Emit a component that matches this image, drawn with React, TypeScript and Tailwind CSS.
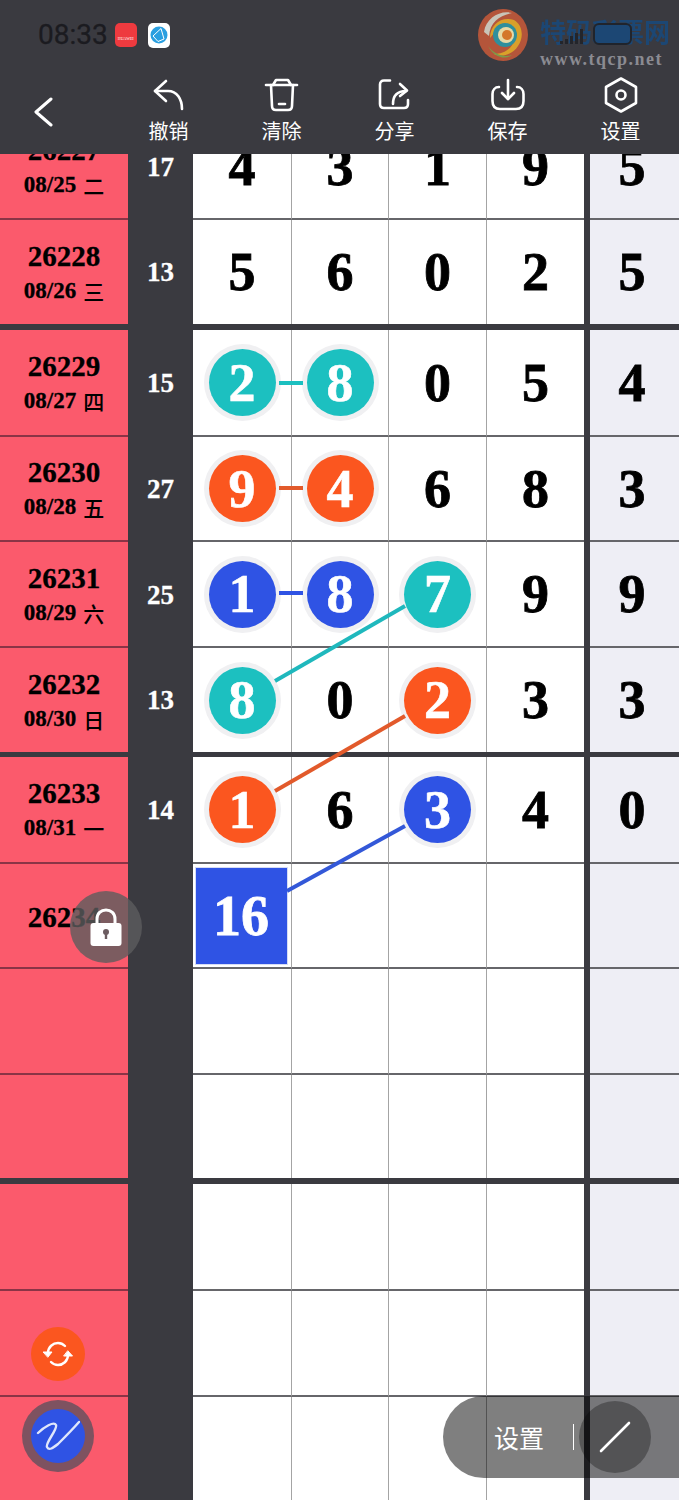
import React from "react";

const RED = "bg-[#fb5a6c]";
const SERIF = "font-['Liberation_Serif','Noto_Sans_CJK_SC',serif]";

type Ball = { n: number; color: string };
type Row = {
  h: number;
  id?: string;
  date?: string;
  sum?: string;
  cells?: (string | Ball | null)[];
  last?: string;
  line?: boolean;
  block?: string;
};

const TEAL = "bg-[#1cc0c0]";
const ORANGE = "bg-[#fb561f]";
const BLUE = "bg-[#2f53e4]";

// one block of rows per group, a thick bar goes between groups
const groups: Row[][] = [
  [
    { h: 105, id: "26227", date: "08/25 二", sum: "17", cells: ["4", "3", "1", "9"], last: "5", line: true },
    { h: 104, id: "26228", date: "08/26 三", sum: "13", cells: ["5", "6", "0", "2"], last: "5" },
  ],
  [
    { h: 107, id: "26229", date: "08/27 四", sum: "15", cells: [{ n: 2, color: TEAL }, { n: 8, color: TEAL }, "0", "5"], last: "4", line: true },
    { h: 105, id: "26230", date: "08/28 五", sum: "27", cells: [{ n: 9, color: ORANGE }, { n: 4, color: ORANGE }, "6", "8"], last: "3", line: true },
    { h: 106, id: "26231", date: "08/29 六", sum: "25", cells: [{ n: 1, color: BLUE }, { n: 8, color: BLUE }, { n: 7, color: TEAL }, "9"], last: "9", line: true },
    { h: 104, id: "26232", date: "08/30 日", sum: "13", cells: [{ n: 8, color: TEAL }, "0", { n: 2, color: ORANGE }, "3"], last: "3" },
  ],
  [
    { h: 107, id: "26233", date: "08/31 一", sum: "14", cells: [{ n: 1, color: ORANGE }, "6", { n: 3, color: BLUE }, "4"], last: "0", line: true },
    { h: 105, id: "26234", block: "16", line: true },
    { h: 106, line: true },
    { h: 103 },
  ],
  [
    { h: 107, line: true },
    { h: 106, line: true },
    { h: 103 },
  ],
];

function BallCell({ n, color }: Ball) {
  return (
    <div className={`flex h-[67px] w-[67px] items-center justify-center rounded-full text-[54px] font-bold leading-none text-white ring-[5px] ring-[#f0f0f2] [-webkit-text-stroke:0.6px_white] ${color}`}>
      {n}
    </div>
  );
}

function TableRow({ row }: { row: Row }) {
  const rule = row.line ? "border-b-2 border-b-[#66666a]" : "";
  const redRule = row.line ? "border-b-2 border-b-[#8a3446]" : "";
  const cells = row.cells ?? [null, null, null, null];
  const [day, week] = row.date ? row.date.split(" ") : [];
  return (
    <div className="grid grid-cols-[128px_65px_99px_97px_98px_97px_6px_89px]" style={{ height: row.h }}>
      <div className={`flex flex-col items-center justify-center pt-[2px] font-bold text-black ${RED} ${redRule}`}>
        {row.id && <div className="text-[29px] leading-[34px] [-webkit-text-stroke:0.3px_black]">{row.id}</div>}
        {row.date && (
          <div className="flex items-center pt-[1px] leading-[34px]">
            <span className="text-[23px] [-webkit-text-stroke:0.3px_black]">{day}</span>
            <span className="ml-[7px] font-['Noto_Sans_CJK_SC',sans-serif] text-[21px] font-medium">{week}</span>
          </div>
        )}
      </div>
      <div className="flex items-center justify-center bg-[#3a3a40] text-[27px] font-bold text-white [-webkit-text-stroke:0.3px_white]">{row.sum}</div>
      {cells.map((c, i) => (
        <div
          key={i}
          className={`flex items-center justify-center bg-white text-[54px] font-bold leading-none text-black [-webkit-text-stroke:0.8px_black] ${rule} ${i < 3 ? "border-r border-r-[#a4a4a4]" : ""}`}
        >
          {i === 0 && row.block ? (
            <div className="mr-[2px] flex h-[98px] w-[93px] items-center justify-center border border-[#d5dcf5] bg-[#2f53e4] text-[56px] text-white [-webkit-text-stroke:0.8px_white]">{row.block}</div>
          ) : typeof c === "string" ? (
            c
          ) : c ? (
            <BallCell {...c} />
          ) : null}
        </div>
      ))}
      <div className="bg-[#3a3a40]" />
      <div className={`flex items-center justify-center bg-[#eeeef5] pr-[5px] text-[54px] font-bold leading-none text-black [-webkit-text-stroke:0.8px_black] ${rule}`}>{row.last}</div>
    </div>
  );
}

function ToolIcon({ children }: { children: React.ReactNode }) {
  return (
    <svg width="36" height="36" viewBox="0 0 36 36" fill="none" stroke="white" strokeWidth="2.6" strokeLinecap="round" strokeLinejoin="round">
      {children}
    </svg>
  );
}

const tools: { label: string; icon: React.ReactNode }[] = [
  {
    label: "撤销",
    icon: (
      <>
        <path d="M15 4 L4 14 L15 24" />
        <path d="M4 14 H17 C26 14 31 22 31 32" />
      </>
    ),
  },
  {
    label: "清除",
    icon: (
      <>
        <path d="M2 8 H33" />
        <path d="M9 8 L12 3 H24 L27 8" />
        <path d="M7 8 L8 29 C8 32 9.5 33 12 33 H24 C26.5 33 28 32 28 29 L29 8" />
        <path d="M15 27 H21" />
      </>
    ),
  },
  {
    label: "分享",
    icon: (
      <>
        <path d="M13 3.5 H7 C4.5 3.5 3 5 3 7.5 V27 C3 29.5 4.5 31 7 31 H27 C29.5 31 31 29.5 31 27 V23" />
        <path d="M16 27 C16 19 20 14 29 14" />
        <path d="M23 7 L30 13.5 L23 19" />
      </>
    ),
  },
  {
    label: "保存",
    icon: (
      <>
        <path d="M9 10 C5 10 2.5 13 2.5 17 V24 C2.5 29 5 32 10 32 H26 C31 32 33.5 29 33.5 24 V17 C33.5 13 31 10 27 10" />
        <path d="M18 3 V22" />
        <path d="M12 16 L18 22 L24 16" />
      </>
    ),
  },
  {
    label: "设置",
    icon: (
      <>
        <path d="M18 1.5 L33 10 V26 L18 34.5 L3 26 V10 Z" />
        <circle cx="18" cy="18" r="4.5" />
      </>
    ),
  },
];

function StatusBar() {
  return (
    <div className="flex h-[70px] items-center pl-[38px]">
      <span className="font-['Roboto',sans-serif] text-[28px] leading-none text-[#1b1b20] [-webkit-text-stroke:0.3px_#1b1b20]">08:33</span>
      <div className="ml-[7px] flex h-[24px] w-[22px] flex-col items-center justify-end rounded-[5px] bg-[#ee3a3f] pb-[6px] text-[4px] leading-none text-white">HUAWEI</div>
      <div className="ml-[11px] flex h-[25px] w-[22px] items-center justify-center rounded-[5px] bg-white">
        <svg width="18" height="18" viewBox="0 0 18 18">
          <circle cx="9" cy="9" r="8.5" fill="#2a9fe0" />
          <path d="M3 10 L11 2.5 L14 13 L8 15.5 Z" fill="none" stroke="white" strokeWidth="1" />
        </svg>
      </div>
    </div>
  );
}

// site stamp in the top right corner, lies above the status icons
function SiteMark() {
  return (
    <div className="absolute left-[476px] top-[8px] flex">
      <svg width="54" height="54" viewBox="0 0 54 54">
        <ellipse cx="27" cy="27" rx="25" ry="26" fill="#b4553a" />
        <path d="M8 24 C10 10 24 2 36 5 C24 7 14 14 13 28 Z" fill="#c9c4b8" />
        <path d="M14 30 C14 16 26 8 38 12 C47 17 48 30 42 38 C37 46 26 50 18 46 C26 46 36 42 38 32 C40 22 30 16 24 20 C18 24 16 28 14 30 Z" fill="#d9a02a" />
        <ellipse cx="29" cy="27" rx="12" ry="12" fill="#2f8f9c" />
        <ellipse cx="30" cy="27" rx="8" ry="8" fill="#e6d9a6" />
        <ellipse cx="31" cy="27" rx="5" ry="5" fill="#d4762a" />
        <path d="M12 38 C18 46 28 50 36 47 C30 52 18 50 12 38 Z" fill="#7c9a4a" />
      </svg>
      <div className="relative ml-[10px] pt-[9px]">
        <div className="w-[130px] font-['Noto_Sans_CJK_SC',sans-serif] text-[26px] font-bold leading-[28px] text-[#1c4774] blur-[0.6px]">特码彩票网</div>
        <div className="absolute left-[20px] top-[20px] flex h-[16px] items-end gap-[2px]">
          {[3, 5, 8, 11, 15].map((h) => (
            <div key={h} className="w-[3px] bg-[#23252b]" style={{ height: h }} />
          ))}
        </div>
        <div className="absolute left-[53px] top-[15px] h-[22px] w-[39px] rounded-[6px] border-2 border-[#20242c] bg-[#1c4774]" />
        <div className="mt-[5px] font-['Liberation_Serif',serif] text-[18px] font-bold leading-[18px] tracking-[1.5px] text-[#8b8b92]">www.tqcp.net</div>
      </div>
    </div>
  );
}

function Toolbar() {
  return (
    <div className="flex h-[84px]">
      <div className="flex w-[112px] items-center pl-[33px]">
        <svg width="20" height="32" viewBox="0 0 20 32" fill="none" stroke="white" strokeWidth="3" strokeLinecap="round" strokeLinejoin="round">
          <path d="M18 3 L3 16 L18 29" />
        </svg>
      </div>
      {tools.map((t) => (
        <div key={t.label} className="flex w-[113px] flex-col items-center pt-[7px]">
          <ToolIcon>{t.icon}</ToolIcon>
          <div className="mt-[5px] font-['Noto_Sans_CJK_SC',sans-serif] text-[20px] leading-[26px] text-white">{t.label}</div>
        </div>
      ))}
    </div>
  );
}

export default function App() {
  return (
    <div className={`relative h-[1500px] w-[679px] overflow-hidden bg-[#3a3a40] ${SERIF}`}>
      <header className="relative h-[154px] bg-[#3a3a40]">
        <StatusBar />
        <Toolbar />
      </header>
      <SiteMark />

      {/* table is scrolled, the first row sits partly under the header */}
      <div className="h-[1346px] overflow-hidden">
        <div className="-mt-[39px]">
          {groups.map((g, i) => (
            <div key={i}>
              {g.map((row, j) => (
                <TableRow key={j} row={row} />
              ))}
              {i < groups.length - 1 && <div className={i === 1 ? "h-[5px] bg-[#3a3a40]" : "h-[6px] bg-[#3a3a40]"} />}
            </div>
          ))}
        </div>
      </div>

      {/* links between the marked balls */}
      <svg className="pointer-events-none absolute left-0 top-0" width="679" height="1500" fill="none" strokeWidth="4">
        <path d="M279 383 H303" stroke="#1cc0c0" />
        <path d="M279 488 H303" stroke="#e25a2b" />
        <path d="M279 593 H303" stroke="#2f53e4" />
        <path d="M275 681 L405 606" stroke="#1fb8bd" />
        <path d="M275 791 L405 716" stroke="#e25a2b" />
        <path d="M287 891 L405 826" stroke="#3358d8" />
      </svg>

      {/* lock toggle */}
      <div className="absolute left-[70px] top-[891px] flex h-[72px] w-[72px] items-center justify-center rounded-full bg-[#5c5c5e]/80">
        <svg width="32" height="38" viewBox="0 0 32 38">
          <path d="M7 17 V11 C7 5.5 11 2 16 2 C21 2 25 5.5 25 11 V17" fill="none" stroke="white" strokeWidth="3" />
          <rect x="0.5" y="15" width="31" height="23" rx="3" fill="white" />
          <circle cx="16" cy="24" r="3" fill="#6b5c60" />
          <rect x="14.8" y="25" width="2.4" height="6" fill="#6b5c60" />
        </svg>
      </div>

      {/* refresh */}
      <div className="absolute left-[31px] top-[1327px] flex h-[54px] w-[54px] items-center justify-center rounded-full bg-[#fb561f]">
        <svg width="30" height="26" viewBox="0 0 30 26" fill="none" stroke="white" strokeWidth="2.4" strokeLinecap="round">
          <path d="M5 12 C5 6 10 2 15 2 C18 2 20 3 22 5" />
          <path d="M25 14 C25 20 20 24 15 24 C12 24 10 23 8 21" />
          <path d="M0.5 11 H9 L5 16 Z" fill="white" strokeWidth="1" />
          <path d="M21 15 H29.5 L25 10 Z" fill="white" strokeWidth="1" />
        </svg>
      </div>

      {/* pen */}
      <div className="absolute left-[22px] top-[1400px] flex h-[72px] w-[72px] items-center justify-center rounded-full bg-[#7e5260]">
        <div className="flex h-[54px] w-[54px] items-center justify-center rounded-full bg-[#2f53e4]">
          <svg width="44" height="34" viewBox="0 0 44 34" fill="none" stroke="#dfe6fb" strokeWidth="2.4" strokeLinecap="round" strokeLinejoin="round">
            <path d="M2 14 C8 8 18 2 20 6 C22 10 9 24 11 28 C13 32 17 29 22 25 C28 19 36 11 43 3" />
          </svg>
        </div>
      </div>

      <div className="absolute left-[443px] top-[1396px] flex h-[82px] w-[236px] items-center rounded-l-[41px] bg-black/50 pl-[51px]">
        <span className="font-['Noto_Sans_CJK_SC',sans-serif] text-[25px] leading-none text-white">设置</span>
        <div className="ml-[29px] h-[26px] w-[1px] bg-white" />
        <div className="ml-[5px] flex h-[72px] w-[72px] items-center justify-center rounded-full bg-black/30">
          <svg width="32" height="32" viewBox="0 0 32 32" stroke="white" strokeWidth="2.6" strokeLinecap="round">
            <path d="M2 30 L30 2" />
          </svg>
        </div>
      </div>
    </div>
  );
}
